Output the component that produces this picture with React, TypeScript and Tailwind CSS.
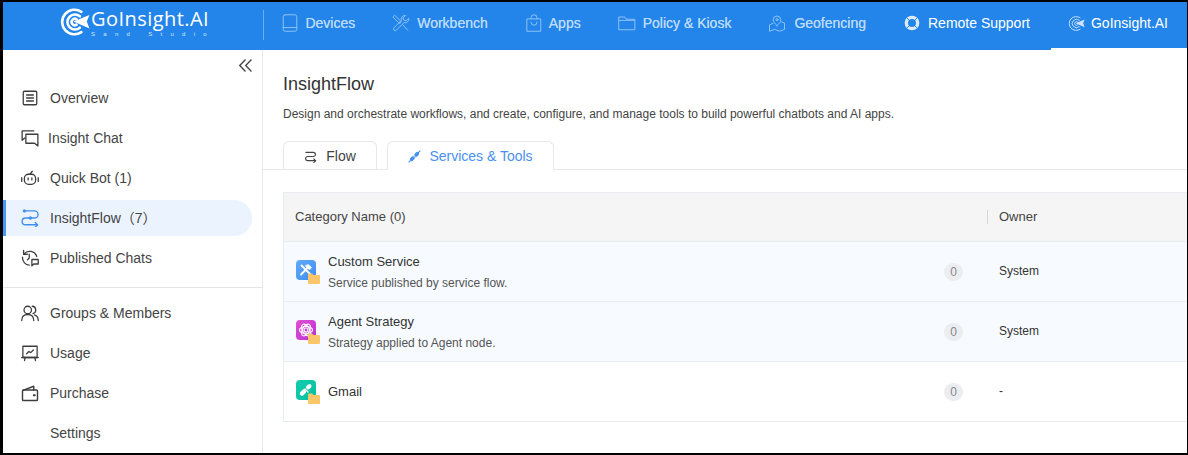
import type { ReactNode } from 'react';

type IconProps = { className?: string };

function Svg({ className, children, width = 1.5 }: IconProps & { children: ReactNode; width?: number }) {
  return (
    <svg
      viewBox="0 0 24 24"
      fill="none"
      stroke="currentColor"
      strokeWidth={width}
      strokeLinecap="round"
      strokeLinejoin="round"
      className={className}
    >
      {children}
    </svg>
  );
}

// Logo target with paper plane, drawn as concentric arcs
function TargetLogo({ className, strokeWidth = 2.4 }: IconProps & { strokeWidth?: number }) {
  return (
    <svg viewBox="0 0 28 28" fill="none" stroke="currentColor" strokeWidth={strokeWidth} strokeLinecap="round" className={className}>
      <path d="M20 4.500A11.500 11.500 0 1 0 20 23.500" />
      <path d="M18.500 8.700A7 7 0 1 0 18.500 19.300" />
      <path d="M15.500 11.500A3 3 0 1 0 15.500 16.500" />
      <path d="M27.500 7.500 12.500 13.500 27.500 20 25 13.500Z" fill="currentColor" stroke="none" />
    </svg>
  );
}

const DevicesIcon = ({ className }: IconProps) => (
  <Svg className={className} width={1.3}>
    <rect x="3" y="1" width="18" height="22" rx="2.500" />
    <path d="M3 18h18" />
  </Svg>
);
const WorkbenchIcon = ({ className }: IconProps) => (
  <Svg className={className} width={1.3}>
    <path d="m1.500 3.500 2-2 9 9-2 2z" />
    <path d="M22.500 6a5 5 0 0 1-6.500 5.500L6 21.500a2.200 2.200 0 0 1-3.300-3.200L12.500 8.500A5 5 0 0 1 18 2l-3.300 3.300.8 2.800 2.800.8z" />
    <path d="m14.500 14.500 6.500 7" />
  </Svg>
);
const AppsIcon = ({ className }: IconProps) => (
  <Svg className={className} width={1.3}>
    <path d="M3 6.500h18V23H3z" />
    <path d="M8 6.500V5a4 4 0 0 1 8 0v1.500" />
    <path d="M8 11a4 4 0 0 0 8 0" />
  </Svg>
);
const FolderIcon = ({ className }: IconProps) => (
  <Svg className={className} width={1.3}>
    <path d="M1.500 4H9l2 3h11.500v14h-21z" />
    <path d="M1.500 8.500H22" />
  </Svg>
);
const GeoIcon = ({ className }: IconProps) => (
  <Svg className={className} width={1.3}>
    <path d="M12 15.500c-3.500-3-5-5.200-5-7.800a5 5 0 0 1 10 0c0 2.600-1.500 4.800-5 7.800z" />
    <circle cx="12" cy="7.500" r="1.400" />
    <path d="M6.500 12.500 2 14.500V23l6.500-2.500 7 2.500 6.500-2.500v-8.500l-4-1.500" />
  </Svg>
);
const LifeRing = ({ className }: IconProps) => (
  <svg viewBox="0 0 24 24" fill="none" stroke="currentColor" className={className}>
    <circle cx="12" cy="12" r="8.500" strokeWidth={5} />
    <path d="m4.500 4.500 4.500 4.500m6 6 4.500 4.500m0-15-4.500 4.500m-6 6-4.500 4.500" stroke="#2385ea" strokeWidth={1.400} />
  </svg>
);

const OverviewIcon = ({ className }: IconProps) => (
  <Svg className={className} width={1.7}>
    <rect x="3" y="3" width="18" height="18" rx="1.500" />
    <path d="M7.500 8h9M7.500 12h9M7.500 16h9" />
  </Svg>
);
const ChatIcon = ({ className }: IconProps) => (
  <Svg className={className} width={1.7}>
    <path d="M17 2.500H1.500V15l3.500-3" />
    <path d="M6.500 7h16v15.500L18 19H6.500z" />
  </Svg>
);
const BotIcon = ({ className }: IconProps) => (
  <Svg className={className} width={1.7}>
    <rect x="4.500" y="7" width="15" height="13.500" rx="5.500" />
    <path d="m12 7 3-4" />
    <path d="M1 11.500v5M23 11.500v5" />
    <path d="M9.500 12v2.500M14.500 12v2.500" />
  </Svg>
);
const FlowIcon = ({ className }: IconProps) => (
  <Svg className={className} width={1.8}>
    <path d="M5.500 2.500H18a4.500 4.500 0 0 1 0 9.500H6a4.500 4.500 0 0 0 0 9h16" />
    <path d="m19 18 3 3-3 3" />
    <circle cx="4.500" cy="2.500" r="1.200" />
    <circle cx="12.500" cy="12" r="1.500" />
  </Svg>
);
const PublishedIcon = ({ className }: IconProps) => (
  <Svg className={className} width={1.7}>
    <path d="M4 6.500A10 10 0 0 1 21 10" />
    <path d="M3.500 2v5H8.500" />
    <path d="M11 21.500A10 10 0 0 1 2 11" />
    <path d="M11 7v5l-2.500 2.500" />
    <path d="M14.500 14H23v6h-6l-2.500 2.500z" />
  </Svg>
);
const GroupsIcon = ({ className }: IconProps) => (
  <Svg className={className} width={1.7}>
    <circle cx="9" cy="8" r="5" />
    <path d="M1 22c0-5 3-8 8-8s8 3 8 8" />
    <path d="M15 3a5 5 0 0 1 1 9.800" />
    <path d="M18 14.500c3 1 5 3.700 5 7.500" />
  </Svg>
);
const UsageIcon = ({ className }: IconProps) => (
  <Svg className={className} width={1.7}>
    <rect x="2.500" y="3" width="19" height="15" />
    <path d="M1 18h22" />
    <path d="M5.500 18l-.8 4M18.500 18l.8 4" />
    <path d="m7.500 13 3-3 2.500 1.500 3.500-3.500" />
  </Svg>
);
const WalletIcon = ({ className }: IconProps) => (
  <Svg className={className} width={1.9}>
    <rect x="2" y="8" width="20" height="14" rx="1.500" />
    <path d="M2.500 8.500 17 3v5" />
    <path d="M17 15h1.500" strokeWidth={2.400} />
  </Svg>
);

function ToolBadge({ from, to, children }: { from: string; to: string; children: ReactNode }) {
  return (
    <span className="relative block w-[24px] h-[24px] shrink-0">
      <span
        className="block w-[20px] h-[20px] rounded-[4px]"
        style={{ background: `linear-gradient(135deg, ${from}, ${to})` }}
      >
        <svg viewBox="0 0 20 20" className="w-[20px] h-[20px] text-white" fill="none" stroke="currentColor" strokeWidth={1.800} strokeLinecap="round">
          {children}
        </svg>
      </span>
      {/* folder overlay */}
      <svg viewBox="0 0 12 11" className="absolute right-0 bottom-0 w-[12px] h-[11px]">
        <path d="M0 1.500A1 1 0 0 1 1 .5h3l1.500 1.500H11a1 1 0 0 1 1 1V10a1 1 0 0 1-1 1H1a1 1 0 0 1-1-1z" fill="#fbc669" />
      </svg>
    </span>
  );
}

const TOP_NAV = [
  { label: 'Devices', icon: DevicesIcon, gap: 'gap-[7px]' },
  { label: 'Workbench', icon: WorkbenchIcon, gap: 'gap-[8px]' },
  { label: 'Apps', icon: AppsIcon, gap: 'gap-[7px]' },
  { label: 'Policy & Kiosk', icon: FolderIcon, gap: 'gap-[8px]' },
  { label: 'Geofencing', icon: GeoIcon, gap: 'gap-[9px]' },
];

const MENU_TOP = [
  { label: 'Overview', icon: OverviewIcon },
  { label: 'Insight Chat', icon: ChatIcon, tight: true },
  { label: 'Quick Bot (1)', icon: BotIcon },
  { label: 'InsightFlow（7）', icon: FlowIcon, active: true },
  { label: 'Published Chats', icon: PublishedIcon },
];

const MENU_BOTTOM = [
  { label: 'Groups & Members', icon: GroupsIcon },
  { label: 'Usage', icon: UsageIcon },
  { label: 'Purchase', icon: WalletIcon },
  { label: 'Settings' },
];

function MenuItem({ label, icon: Icon, active, tight }: { label: string; icon?: (p: IconProps) => ReactNode; active?: boolean; tight?: boolean }) {
  return (
    <div className="h-[40px] flex items-center pr-[10px]">
      <div
        className={`w-full h-[36px] flex items-center pl-[16px] rounded-r-[18px] border-l-[3px] ${
          active ? 'bg-[#ebf3fe] border-[#4a94f3]' : 'border-transparent'
        }`}
      >
        <span className={`${tight ? 'w-[26px]' : 'w-[28px]'} shrink-0 flex`}>
          {Icon && <Icon className={`w-[18px] h-[18px] -ml-[1px] ${active ? 'text-[#3f8ff0]' : 'text-[#3d3d3d]'}`} />}
        </span>
        <span className="text-[14px] text-[#444] whitespace-nowrap font-['Liberation_Sans','Noto_Sans_CJK_SC',sans-serif]">{label}</span>
      </div>
    </div>
  );
}

const ROWS = [
  {
    name: 'Custom Service',
    desc: 'Service published by service flow.',
    owner: 'System',
    tinted: true,
    badge: (
      <ToolBadge from="#62aaf8" to="#3f8df2">
        <path d="M5.500 5.500 14 14" strokeWidth={1.800} />
        <path d="m5 14.500 6.500-6.500" strokeWidth={1.800} />
        <path d="m9.500 5.500 3-1 3 3-1.500 2-2.500-1z" fill="currentColor" strokeWidth={0.600} />
      </ToolBadge>
    ),
  },
  {
    name: 'Agent Strategy',
    desc: 'Strategy applied to Agent node.',
    owner: 'System',
    tinted: true,
    badge: (
      <ToolBadge from="#e24fd0" to="#b92fd8">
        <g strokeWidth={1.100}>
          <circle cx="10" cy="10" r="2" />
          <ellipse cx="10" cy="10" rx="6.500" ry="3.500" />
          <ellipse cx="10" cy="10" rx="6.500" ry="3.500" transform="rotate(60 10 10)" />
          <ellipse cx="10" cy="10" rx="6.500" ry="3.500" transform="rotate(120 10 10)" />
        </g>
      </ToolBadge>
    ),
  },
  {
    name: 'Gmail',
    owner: '-',
    badge: (
      <ToolBadge from="#11cdb0" to="#08bf9f">
        <path d="m6 13.500 2-2" strokeWidth={4.500} />
        <path d="m12 7.500 1.500-1.500" strokeWidth={4} />
        <path d="m9 9 3 3" strokeWidth={1.200} />
      </ToolBadge>
    ),
  },
];

export default function App() {
  return (
    <div className="h-[455px] w-[1188px] overflow-hidden flex flex-col bg-white border-t-2 border-l-[3px] border-r border-b-2 border-black font-['Liberation_Sans',Arial,sans-serif]">
      {/* Top bar */}
      <header className="h-[48px] shrink-0 flex items-stretch bg-[#2385ea]">
        <div className="w-[260px] shrink-0 flex items-start pt-[5px]">
          <div className="ml-[57px] flex items-start gap-[1px] text-white">
            <TargetLogo className="w-[30px] h-[30px]" />
            <div className="flex flex-col w-[118px] pt-[1px]">
              <span className="text-[20px] leading-[22px] tracking-[0.45px] font-['Open_Sans',sans-serif] whitespace-nowrap">GoInsight.AI</span>
              <span className="mt-[1px] text-[6px] leading-[7px] tracking-[8.300px] text-[#d6e8fb] whitespace-nowrap">Sand Studio</span>
            </div>
          </div>
        </div>
        <div className="self-start mt-[8px] w-px h-[30px] bg-[#6daef1]" />
        <nav className="flex items-stretch pb-[6px] text-[14px] text-[#b9daf9] [text-shadow:0_0_0.5px_#b9daf9]">
          {TOP_NAV.map((item) => (
            <div key={item.label} className={`flex items-center ${item.gap} px-[19px] whitespace-nowrap`}>
              <item.icon className="w-[18px] h-[18px] -mx-[1px] text-[#8fc2f6]" />
              {item.label}
            </div>
          ))}
          <div className="flex items-center gap-[8px] px-[19px] text-white [text-shadow:none] whitespace-nowrap">
            <LifeRing className="w-[16px] h-[16px] text-[#dcecfc]" />
            Remote Support
          </div>
          <div className="flex items-center gap-[6px] px-[19px] text-white [text-shadow:none] whitespace-nowrap">
            <TargetLogo className="w-[17px] h-[17px] text-[#cfe4fb]" strokeWidth={1.500} />
            GoInsight.AI
          </div>
        </nav>
      </header>
      <div className="h-0 relative">
        <div className="absolute right-0 -top-[2px] w-[136px] h-[2px] bg-white" />
      </div>

      <div className="flex-1 flex min-h-0">
        {/* Sidebar */}
        <aside className="w-[260px] shrink-0 border-r border-[#e6e8ec] overflow-hidden">
          <div className="h-[28px] flex items-center justify-end pr-[10px] pt-[2px]">
            <svg viewBox="0 0 12 12" className="w-[13px] h-[13px] text-[#444]" fill="none" stroke="currentColor" strokeWidth={1.200}>
              <path d="M6 .5.7 6 6 11.500M11.500.5 6.200 6l5.300 5.500" />
            </svg>
          </div>
          {MENU_TOP.map((m) => (
            <MenuItem key={m.label} {...m} />
          ))}
          <div className="mt-[9px] mb-[5px] border-t border-[#e3e5ea]" />
          {MENU_BOTTOM.map((m) => (
            <MenuItem key={m.label} {...m} />
          ))}
        </aside>

        {/* Main */}
        <main className="flex-1 min-w-0 overflow-hidden">
          <div className="pl-[20px] pt-[23px]">
            <h1 className="text-[18px] leading-[22px] text-[#333]">InsightFlow</h1>
            <p className="mt-[10px] text-[12px] leading-[18px] text-[#444]">
              Design and orchestrate workflows, and create, configure, and manage tools to build powerful chatbots and AI apps.
            </p>
          </div>

          {/* Tabs */}
          <div className="mt-[19px] pl-[20px] flex gap-[10px] items-end border-b border-[#e6e8ec] h-[28px]">
            <div className="w-[94px] h-[28px] pt-[1px] flex items-center justify-center gap-[9px] border border-b-0 border-[#e6e8ec] rounded-t-[6px] text-[14px] text-[#444]">
              <svg viewBox="0 0 14 14" className="w-[13px] h-[13px]" fill="none" stroke="currentColor" strokeWidth={1.200} strokeLinecap="round" strokeLinejoin="round">
                <path d="M2 2.500h8a2.200 2.200 0 0 1 0 4.500H4a2.200 2.200 0 0 0 0 4.500h8.500" />
                <path d="m10.500 9.500 2 2-2 2" />
              </svg>
              Flow
            </div>
            <div className="w-[167px] h-[29px] -mb-px flex items-center justify-center gap-[8px] bg-white border border-b-0 border-[#e6e8ec] rounded-t-[6px] text-[14px] text-[#4a90ef]">
              <svg viewBox="0 0 14 14" className="w-[13px] h-[13px]" fill="none" stroke="currentColor" strokeLinecap="round">
                <path d="m1 13 2.500-2.500M10.500 3.500 13 1" strokeWidth={1.200} />
                <path d="m4 10 1.200-1.200M8.800 5.200 10 4" strokeWidth={4} />
                <path d="m6 6.500 1.500 1.500" strokeWidth={1} />
              </svg>
              Services &amp; Tools
            </div>
          </div>

          {/* Table */}
          <div className="mt-[22px] ml-[20px] border-l border-t border-[#e9ecf0]">
            <div className="h-[49px] flex items-center bg-[#f5f5f5] border-b border-[#e9ecf0] text-[13px] text-[#444]">
              <div className="w-[704px] pl-[11px] flex items-center justify-between">
                <span>Category Name (0)</span>
                <span className="w-px h-[14px] bg-[#d8d8d8]" />
              </div>
              <div className="pl-[11px]">Owner</div>
            </div>
            {ROWS.map((row) => (
              <div
                key={row.name}
                className={`h-[60px] flex items-center border-b border-[#e9ecf0] ${row.tinted ? 'bg-[#f7fbff]' : 'bg-white'}`}
              >
                <div className="w-[704px] pl-[12px] pr-[25px] flex items-center">
                  {row.badge}
                  <div className={`ml-[8px] flex-1 min-w-0 ${row.desc ? 'pt-[2px]' : ''}`}>
                    <div className="text-[13px] leading-[18px] text-[#333]">{row.name}</div>
                    {row.desc && <div className="mt-[3px] text-[12px] leading-[18px] text-[#555]">{row.desc}</div>}
                  </div>
                  <span className="w-[19px] h-[18px] rounded-full bg-[#ebedf0] text-[#888] text-[12px] flex items-center justify-center">0</span>
                </div>
                <div className="pl-[11px] pb-[2px] text-[12px] text-[#333]">{row.owner}</div>
              </div>
            ))}
          </div>
        </main>
      </div>
    </div>
  );
}
